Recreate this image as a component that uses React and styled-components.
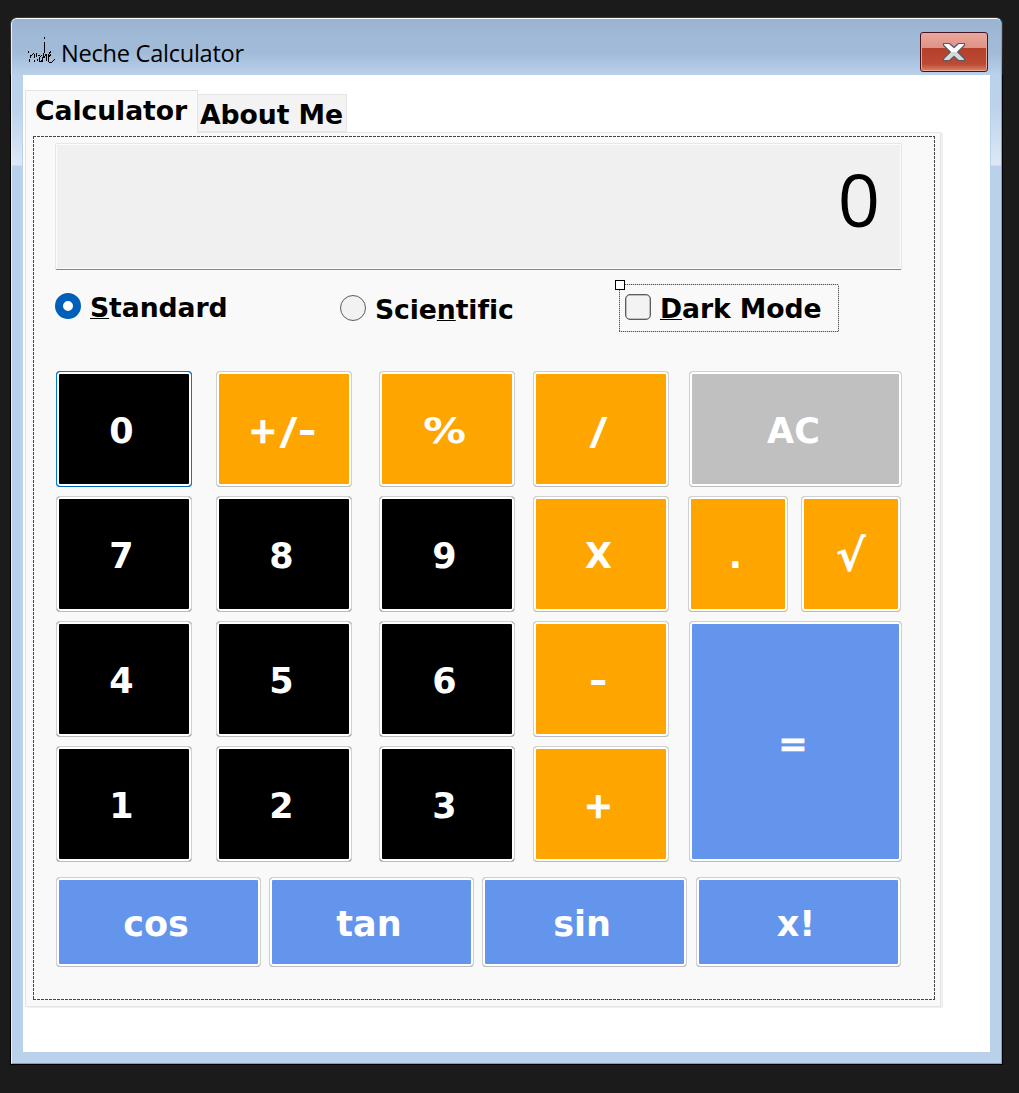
import React from 'react';
import styled, { createGlobalStyle } from 'styled-components';

const bold = '"DejaVu Sans", Verdana, sans-serif';
const light = '"Open Sans", "Noto Sans", sans-serif';

const GlobalStyle = createGlobalStyle`
  * { box-sizing: border-box; }
  html, body { margin: 0; background: #1b1b1b; }
  body { min-height: 1093px; overflow: hidden; }
`;

const Desktop = styled.div`
  height: 1093px;
  padding: 17px 16px 28px 10px;
  background: #1b1b1b;
`;

const WindowShadow = styled.div`
  width: 993px;
  height: 1048px;
  padding: 1px;
  border-radius: 7px 7px 0 0;
  background: linear-gradient(#3b3b3b 0 2px, #1b1b1b 58px, #000 58px);
`;

const WindowFrame = styled.div`
  display: flex;
  flex-direction: column;
  height: 1046px;
  border: 1px solid;
  border-color: #fff #3fc0e0 #3fb9dc #e9f3fb;
  border-radius: 6px 6px 0 0;
  background: #b9d1ea;
  overflow: hidden;
`;

const TitleBar = styled.header`
  display: flex;
  align-items: flex-start;
  height: 56px;
  flex: none;
  padding: 13px 13px 0 15px;
  background: linear-gradient(#99b4d1, #9fb9d6 16px, #a2bbd8 34px, #b9d1ea);
`;

const Logo = styled.svg`
  width: 30px;
  height: 30px;
  margin-top: 3px;
  fill: none;
  stroke: #000;
  shape-rendering: crispEdges;
`;

const Title = styled.h1`
  flex: 1;
  margin: 4px 0 0 4px;
  font: 400 23.6px/34px ${light};
  letter-spacing: -0.27px;
  color: #000;
  white-space: nowrap;
`;

const CloseButton = styled.button`
  display: flex;
  align-items: center;
  justify-content: center;
  width: 68px;
  height: 40px;
  padding: 0;
  border: 1px solid #431422;
  border-radius: 3px;
  box-shadow: inset 0 0 0 1px #e9a797;
  background: linear-gradient(#eaa89c, #df9285 15px, #b5402a 15px, #bc4a33 31px, #d98268);
`;

const FrameBody = styled.div`
  display: flex;
  flex: 1;
  padding: 0 11px 11px;
  background:
    linear-gradient(#b9d1ea, #b9d1ea) 10px 0 / 969px 100% no-repeat,
    linear-gradient(#b9d1ea 0, #bdd3ec 35px, #dce8f6 88px, #dce8f6 90px, #b9d1ea 91px);
`;

const Client = styled.main`
  width: 967px;
  padding: 15px 0 0 2px;
  background: #fff;
`;

const TabStrip = styled.div`
  display: flex;
  align-items: flex-end;
  height: 42px;
`;

const Tab = styled.div`
  width: ${(p) => p.$width}px;
  height: ${(p) => (p.$active ? 43 : 38)}px;
  margin-bottom: ${(p) => (p.$active ? -1 : 0)}px;
  padding-left: ${(p) => (p.$active ? 9 : 2)}px;
  position: relative;
  z-index: ${(p) => (p.$active ? 1 : 0)};
  border: 1px solid #e5e5e5;
  border-bottom: ${(p) => (p.$active ? 'none' : '1px solid #e5e5e5')};
  border-left-width: ${(p) => (p.$active ? 1 : 0)}px;
  background: ${(p) => (p.$active ? '#f9f9f9' : '#f3f3f3')};
  font: 700 26.67px/39px ${bold};
  letter-spacing: -0.07px;
  white-space: nowrap;
`;

const TabPage = styled.section`
  width: 916px;
  height: 875px;
  padding: 3px 5px 6px 7px;
  border: 1px solid #e5e5e5;
  box-shadow: 2px 1px 0 #f0f0f0;
  background: #f9f9f9;
`;

const dash = '#444 0 3px, transparent 3px 4px';

const DesignSurface = styled.div`
  display: flex;
  flex-direction: column;
  width: 902px;
  height: 864px;
  padding: 7px 0 0 22px;
  background:
    repeating-linear-gradient(90deg, ${dash}) 0 0 / 100% 1px no-repeat,
    repeating-linear-gradient(90deg, ${dash}) 0 100% / 100% 1px no-repeat,
    repeating-linear-gradient(180deg, ${dash}) 0 0 / 1px 100% no-repeat,
    repeating-linear-gradient(180deg, ${dash}) 100% 0 / 1px 100% no-repeat;
`;

const Display = styled.output`
  display: block;
  flex: none;
  width: 847px;
  height: 127px;
  padding: 4px 21px 0 0;
  border: 1px solid #e6e6e6;
  border-bottom-color: #868686;
  border-radius: 2px;
  box-shadow: inset 0 0 0 1px #fcfcfc;
  background: #f0f0f0;
  font: 400 74px/102px ${light};
  text-align: right;
`;

const Modes = styled.div`
  display: grid;
  grid-template-columns: 285px 279px 220px;
  align-items: start;
  height: 101px;
  padding-top: 14px;
`;

const Option = styled.label`
  display: flex;
  gap: 9px;
  margin-top: ${(p) => p.$top}px;
  font: 700 26.67px/26px ${bold};
  letter-spacing: -0.1px;
  white-space: nowrap;

  u {
    text-decoration-thickness: 1px;
    text-underline-offset: 1px;
    text-decoration-skip-ink: none;
  }
`;

const OptionText = styled.span`
  padding-top: 2px;
`;

const Radio = styled.span`
  width: 26px;
  height: 26px;
  flex: none;
  border: ${(p) => (p.$on ? '8px solid #005fb8' : '1px solid #5c5c5c')};
  border-radius: 50%;
  background: ${(p) => (p.$on ? '#fff' : '#f2f2f2')};
`;

const CheckSquare = styled.span`
  width: 26px;
  height: 26px;
  flex: none;
  border: 1px solid #5c5c5c;
  border-radius: 5px;
  box-shadow: inset 0 0 0 0.5px #8a8a8a;
  background: #f3f3f3;
`;

const dot = '#555 0 1px, #ccc 1px 2px';

const Selection = styled.div`
  position: relative;
  width: 220px;
  height: 48px;
  padding: 10px 0 0 6px;
  background:
    repeating-linear-gradient(90deg, ${dot}) 0 0 / 100% 1px no-repeat,
    repeating-linear-gradient(90deg, ${dot}) 0 100% / 100% 1px no-repeat,
    repeating-linear-gradient(180deg, ${dot}) 0 0 / 1px 100% no-repeat,
    repeating-linear-gradient(180deg, ${dot}) 100% 0 / 1px 100% no-repeat;
`;

const Handle = styled.i`
  position: absolute;
  left: -4px;
  top: -4px;
  width: 10px;
  height: 10px;
  border: 1px solid #000;
  background: #fff;
`;

const Keypad = styled.div`
  display: grid;
  grid-template-columns: 160px 163px 154px 156px 213px;
  grid-template-rows: repeat(4, 116px);
  row-gap: 9px;
  padding-left: 1px;
`;

const fills = { digit: '#000', op: '#ffa500', clear: '#c0c0c0', blue: '#6495ed' };

const Key = styled.button`
  display: flex;
  align-items: center;
  justify-content: center;
  width: ${(p) => p.$width || 136}px;
  height: ${(p) => p.$height || 116}px;
  grid-row: span ${(p) => p.$rows || 1};
  padding: 4px ${(p) => p.$inset ?? 5}px 0 0;
  border: 1px solid ${(p) => (p.$focused ? '#0078d4' : '#d0d0d0')};
  border-bottom-color: ${(p) => (p.$focused ? '#0067c0' : '#bcbcbc')};
  border-radius: 4px;
  box-shadow: inset 0 0 0 2px #fff;
  background: ${(p) => fills[p.$kind]};
  color: #fff;
  font: 700 35px/42px ${bold};
`;

const Glyph = styled.span`
  display: inline-block;
  margin: 0 ${(p) => p.$gap || 0}px;
  transform: scale(${(p) => p.$x || 1}, ${(p) => p.$y || 1});
  -webkit-text-stroke: ${(p) => p.$weight || 0}px #fff;
`;

const KeyPair = styled.div`
  display: flex;
  gap: 13px;
  margin-left: -1px;
`;

const FunctionRow = styled.div`
  display: flex;
  gap: 8px;
  padding: 15px 0 0 1px;

  > :last-child { margin-left: 1px; }
`;

const Plus = () => <Glyph $weight={0.7}>+</Glyph>;
const Slash = (p) => <Glyph $x={1.4} $y={1.05} $gap={p.gap}>/</Glyph>;
const Minus = (p) => <Glyph $x={1.3} $gap={p.gap}>-</Glyph>;

export default function App() {
  return (
    <Desktop>
      <GlobalStyle />
      <WindowShadow>
        <WindowFrame>
          <TitleBar>
            <Logo viewBox="0 0 30 30" strokeWidth="1">
              <path d="M1 16l1 2M3 20v3M2 24v3M4 21l3-3M7 19v4M7 25v2M9 18l1 4M10 24v2M11 21l2-1M15 20l-2 2-1 3 1 2 3-2M17.500 2v2M17.500 7v11M17 18l-2 9M17 23l2-4M19.500 19v7M21 24l3-5M24 16l-2 3-1 5 1 3h3l3-3" />
            </Logo>
            <Title>Neche Calculator</Title>
            <CloseButton aria-label="Close">
              <svg width="24" height="20" viewBox="0 0 24 20">
                <defs>
                  <linearGradient id="cross" x1="0" y1="0" x2="0" y2="1">
                    <stop offset="0.5" stopColor="#fff" />
                    <stop offset="0.5" stopColor="#d9d9d9" />
                  </linearGradient>
                </defs>
                <path d="M1.500 1.500h6l4.500 4 4.500-4h6v1.800l-6.800 6.700 6.800 6.700v1.800h-6l-4.500-4-4.500 4h-6v-1.800l6.800-6.700-6.800-6.700z" fill="url(#cross)" stroke="#565a67" strokeWidth="1.2" strokeLinejoin="round" />
              </svg>
            </CloseButton>
          </TitleBar>
          <FrameBody>
            <Client>
              <TabStrip>
                <Tab $active $width={173}>Calculator</Tab>
                <Tab $width={149}>About Me</Tab>
              </TabStrip>
              <TabPage>
                <DesignSurface>
                  <Display>0</Display>
                  <Modes>
                    <Option $top={9}>
                      <Radio $on />
                      <OptionText><u>S</u>tandard</OptionText>
                    </Option>
                    <Option $top={11}>
                      <Radio />
                      <OptionText>Scie<u>n</u>tific</OptionText>
                    </Option>
                    <Selection>
                      <Handle />
                      <Option $top={0}>
                        <CheckSquare />
                        <OptionText><u>D</u>ark Mode</OptionText>
                      </Option>
                    </Selection>
                  </Modes>
                  <Keypad>
                    <Key $kind="digit" $focused>0</Key>
                    <Key $kind="op" $inset={4}><Plus /><Slash gap={4} /><Minus gap={1.5} /></Key>
                    <Key $kind="op"><Glyph $x={1.22}>%</Glyph></Key>
                    <Key $kind="op"><Slash /></Key>
                    <Key $kind="clear" $width={213} $inset={4}>AC</Key>
                    <Key $kind="digit">7</Key>
                    <Key $kind="digit">8</Key>
                    <Key $kind="digit">9</Key>
                    <Key $kind="op">X</Key>
                    <KeyPair>
                      <Key $kind="op" $width={100}>.</Key>
                      <Key $kind="op" $width={100} $inset={1}><Glyph $x={1.3} $y={1.25}>√</Glyph></Key>
                    </KeyPair>
                    <Key $kind="digit">4</Key>
                    <Key $kind="digit">5</Key>
                    <Key $kind="digit">6</Key>
                    <Key $kind="op"><Minus /></Key>
                    <Key $kind="blue" $width={213} $height={241} $rows={2}><Glyph $weight={0.7}>=</Glyph></Key>
                    <Key $kind="digit">1</Key>
                    <Key $kind="digit">2</Key>
                    <Key $kind="digit">3</Key>
                    <Key $kind="op"><Plus /></Key>
                  </Keypad>
                  <FunctionRow>
                    {['cos', 'tan', 'sin', 'x!'].map((name) => (
                      <Key key={name} $kind="blue" $width={205} $height={90}>{name}</Key>
                    ))}
                  </FunctionRow>
                </DesignSurface>
              </TabPage>
            </Client>
          </FrameBody>
        </WindowFrame>
      </WindowShadow>
    </Desktop>
  );
}
